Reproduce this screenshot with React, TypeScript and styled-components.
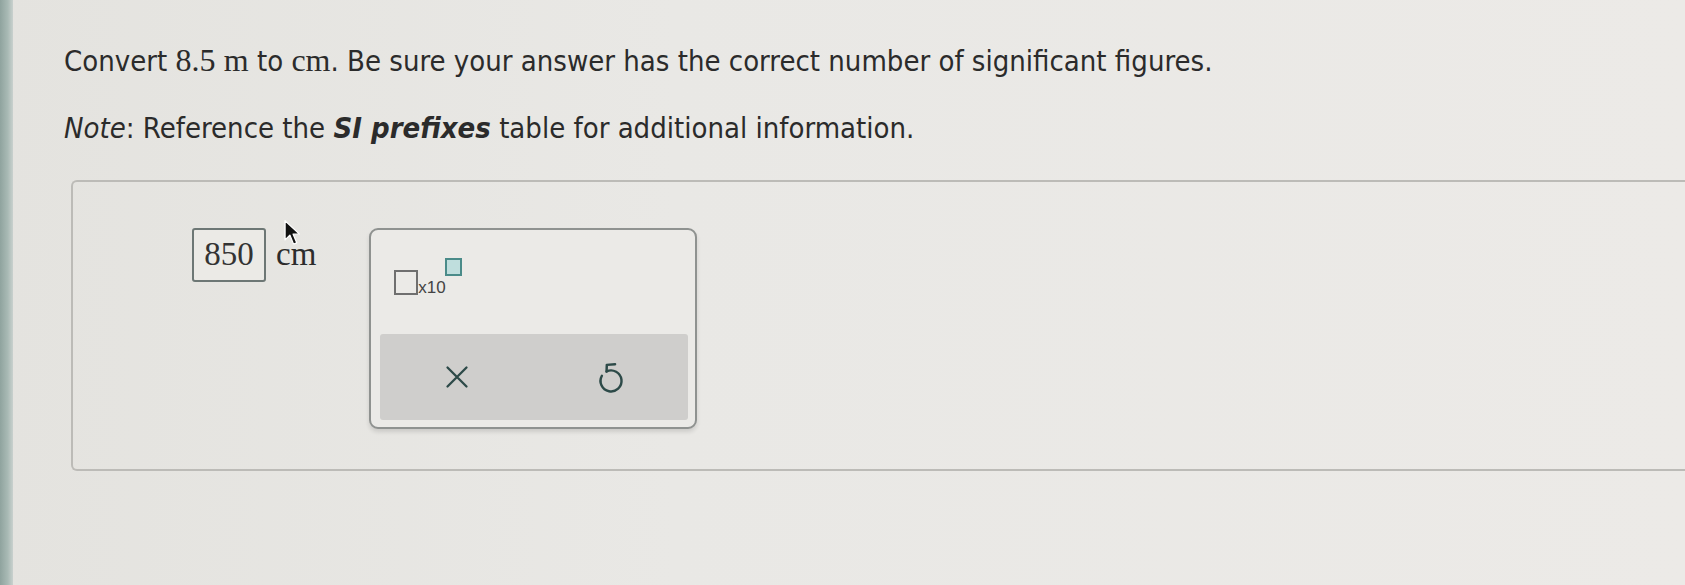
import * as React from 'react';
import styled, { createGlobalStyle } from 'styled-components';

const GlobalStyle = createGlobalStyle`
    html, body {
        margin: 0;
        padding: 0;
        background: #e6e5e1;
        overflow: hidden;
    }
`;

const Screen = styled.div`
    display: flex;
    height: 585px;
    width: 1685px;
    background: linear-gradient(90deg, #e4e3df 0%, #e9e8e5 40%, #eceae7 100%);
`;

const Bezel = styled.div`
    width: 13px;
    flex-shrink: 0;
    background: linear-gradient(90deg, #8fa39e 0%, #a9bab5 60%, #c9d1ce 100%);
`;

const Page = styled.main`
    flex: 1;
    padding: 41px 0 0 51px;
    color: #2b2b2b;
    font-family: "DejaVu Sans Condensed", "Liberation Sans Narrow", "Liberation Sans", sans-serif;
    font-size: 29px;
    line-height: 1.2;
`;

const Paragraph = styled.p<{ $gap?: number }>`
    margin: ${(p) => p.$gap ?? 0}px 0 0 0;
    white-space: nowrap;
`;

const Math = styled.span`
    font-family: "Liberation Serif", serif;
    font-size: 32px;
`;

const Strong = styled.b`
    font-style: italic;
    font-weight: bold;
`;

const Panel = styled.section`
    box-sizing: border-box;
    margin: 34px 0 0 7px;
    height: 291px;
    border: 2px solid #bcbbb7;
    border-right: none;
    border-radius: 6px 0 0 6px;
    display: flex;
    align-items: flex-start;
    padding: 46px 0 0 119px;
`;

const AnswerRow = styled.div`
    position: relative;
    display: flex;
    align-items: center;
    gap: 10px;
`;

const AnswerBox = styled.div`
    box-sizing: border-box;
    width: 74px;
    height: 54px;
    border: 2px solid #6d7775;
    border-radius: 3px;
    display: flex;
    align-items: center;
    justify-content: center;
    font-family: "Liberation Serif", serif;
    font-size: 33px;
    color: #333;
    background: #ebeae6;
`;

const Unit = styled.span`
    font-family: "Liberation Serif", serif;
    font-size: 33px;
    color: #2c2c2c;
`;

const Cursor = styled.svg`
    position: absolute;
    left: 92px;
    top: -9px;
`;

const ToolPanel = styled.div`
    box-sizing: border-box;
    margin-left: 53px;
    width: 328px;
    height: 201px;
    border: 2px solid #8f9290;
    border-radius: 9px;
    background: #ebeae7;
    box-shadow: 0 3px 4px rgba(0, 0, 0, 0.12);
    display: flex;
    flex-direction: column;
`;

const Template = styled.div`
    display: flex;
    align-items: flex-end;
    height: 38px;
    margin: 28px 0 0 23px;
    font-family: "Liberation Sans", sans-serif;
    font-size: 17px;
    color: #444;
`;

const Slot = styled.span<{ $sup?: boolean }>`
    box-sizing: border-box;
    display: block;
    width: ${(p) => (p.$sup ? 17 : 24)}px;
    height: ${(p) => (p.$sup ? 18 : 25)}px;
    border: 2px solid ${(p) => (p.$sup ? '#4a8b89' : '#6f6f6f')};
    background: ${(p) => (p.$sup ? '#bfdedd' : 'transparent')};
    align-self: ${(p) => (p.$sup ? 'flex-start' : 'auto')};
    margin: ${(p) => (p.$sup ? '0 0 0 -1px' : '0 0 1px 0')};
`;

const Times = styled.span`
    line-height: 1;
`;

const ButtonBar = styled.div`
    margin: 38px 0 0 9px;
    width: 308px;
    height: 86px;
    border-radius: 3px;
    background: #cfcecc;
    display: grid;
    grid-template-columns: 1fr 1fr;
    place-items: center;
`;

const IconButton = styled.button`
    border: none;
    background: transparent;
    padding: 0;
    display: flex;
    color: #2d4a48;
    cursor: pointer;
`;

const App: React.FunctionComponent = () => (
    <Screen>
        <GlobalStyle />
        <Bezel />
        <Page>
            <Paragraph>
                Convert <Math>8.5</Math> <Math>m</Math> to <Math>cm</Math>. Be sure your answer has the correct number of significant figures.
            </Paragraph>
            <Paragraph $gap={32}>
                <i>Note</i>: Reference the <Strong>SI prefixes</Strong> table for additional information.
            </Paragraph>
            <Panel>
                <AnswerRow>
                    <AnswerBox>850</AnswerBox>
                    <Unit>cm</Unit>
                    <Cursor width="17" height="29" viewBox="0 0 16 26">
                        <path d="M1 1 L1 19 L5.5 14.5 L9 23 L12 21.8 L8.6 13.6 L14.5 13.6 Z" fill="#111" stroke="#fff" strokeWidth="1.2" strokeLinejoin="round" />
                    </Cursor>
                </AnswerRow>
                <ToolPanel>
                    <Template>
                        <Slot />
                        <Times>x10</Times>
                        <Slot $sup />
                    </Template>
                    <ButtonBar>
                        <IconButton aria-label="clear">
                            <svg width="24" height="24" viewBox="0 0 24 24" fill="none" stroke="currentColor" strokeWidth="2.3" strokeLinecap="round">
                                <path d="M2.5 2.5 L21.5 21.5 M21.5 2.5 L2.5 21.5" />
                            </svg>
                        </IconButton>
                        <IconButton aria-label="undo">
                            <svg width="28" height="33" viewBox="0 0 24 28" fill="none" stroke="currentColor" strokeWidth="2.1" strokeLinecap="round" strokeLinejoin="round">
                                <path d="M15.5 2.6 L8.4 3.2 L8.2 8.8" />
                                <path d="M8.2 8.8 A9 9 0 1 1 4.2 12.5" />
                            </svg>
                        </IconButton>
                    </ButtonBar>
                </ToolPanel>
            </Panel>
        </Page>
    </Screen>
);

export default App;
